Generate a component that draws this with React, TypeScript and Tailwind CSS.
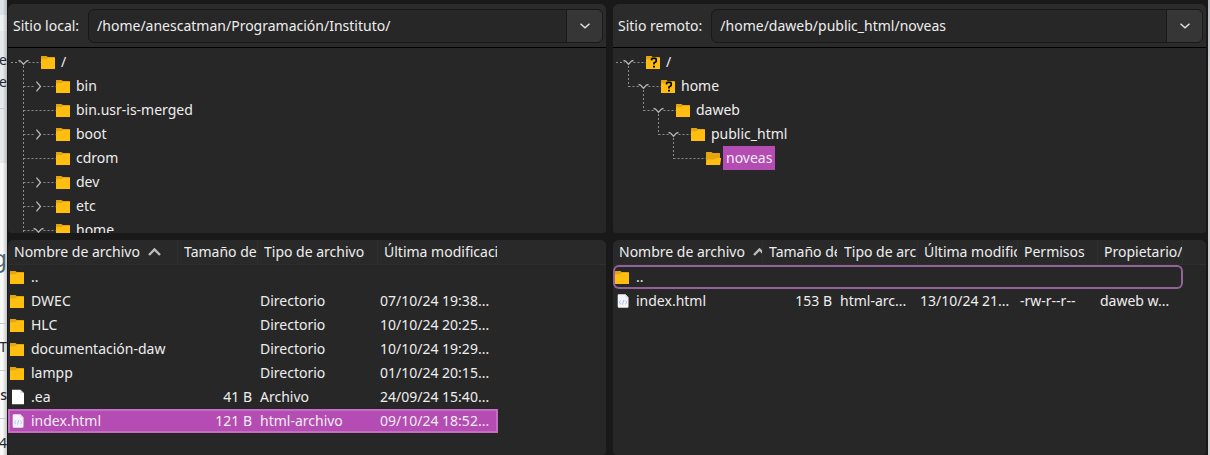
import type { ReactNode } from "react";
import clsx from "clsx";

type IconKind = "folder" | "folder-open" | "folder-unknown" | "file" | "html";

function FileIcon({ kind }: { kind: IconKind }) {
  if (kind === "file" || kind === "html") {
    const isHtml = kind === "html";
    return (
      <svg className="h-4 w-[15px] shrink-0" viewBox="0 0 15 16" aria-hidden="true">
        {isHtml ? (
          <>
            <path d="M3.7 1.2h6.8l3 3.2v9.2q0 1.2-1.2 1.2H3.9q-1.2 0-1.2-1.2V2.3q0-1.1 1-1.1z" fill="#f4f4f8" />
            <path d="M10.3 1.2l3.2 3.3h-2.3q-.9 0-.9-.9z" fill="#dcdce6" />
            <path d="M6 7.6L4.2 9.4 6 11.2M10.2 7.6L12 9.4l-1.8 1.8M8.8 7l-1.4 4.8" fill="none" stroke="#a9b8f2" strokeWidth="0.9" />
          </>
        ) : (
          <>
            <path d="M2 .8h8.4L14 4.2v11H2z" fill="#ffffff" />
            <path d="M10.4.8L14 4.2h-3.6z" fill="#dcdcdc" />
          </>
        )}
      </svg>
    );
  }
  return (
    <svg className="h-[13px] w-[15px] shrink-0" viewBox="0 0 15 13" aria-hidden="true">
      <path d="M0 .5Q0 0 .5 0H5.5L6.6 1H13.5q.5 0 .5.5V12H0z" fill="#e5a50f" />
      {kind === "folder-open" ? (
        <path d="M0 12.5L1 8.2q.2-.7.9-.7h6L10.4 6H15.2l-1 6.4q-.1.6-.7.6H.5q-.5 0-.5-.5z" fill="#ffbe10" />
      ) : (
        <path d="M0 3.2H5.2L7 2H14V12.5q0 .5-.5.5H.5Q0 13 0 12.5z" fill="#ffbe10" />
      )}
      {kind === "folder-unknown" && (
        <>
          <path d="M5.6 4.5V3.3q0-.9 1-.9h2.6q1 0 1 1v1.5q0 .8-.7 1.2L8 7v1.5" fill="none" stroke="#000000" strokeWidth="1.7" />
          <path d="M7 9.7h2v1.9H7z" fill="#000000" />
        </>
      )}
    </svg>
  );
}

type TreeNode = {
  label: string;
  level: number;
  icon: IconKind;
  state: "open" | "closed" | "leaf";
  hasNext?: boolean;
  selected?: boolean;
};

function Guides({ node }: { node: TreeNode }) {
  const width = 33 + node.level * 15;
  const parentX = node.level * 15 + 0.5;
  const toggleX = parentX + 15;
  const startX = node.level === 0 ? 3 : parentX;
  return (
    <svg className="h-6 shrink-0" style={{ width }} viewBox={`0 0 ${width} 24`} aria-hidden="true">
      <g fill="none" stroke="#8c8c8c" strokeDasharray="2 2">
        {node.level > 0 && <path d={`M${parentX} 0V${node.hasNext ? 24 : 13}`} />}
        {node.state === "leaf" ? (
          <path d={`M${startX} 12.5H${width}`} />
        ) : (
          <path d={`M${startX} 12.5H${toggleX - 4}M${toggleX + 5} 12.5H${width}`} />
        )}
        {node.state === "open" && <path d={`M${toggleX} 16V24`} />}
      </g>
      {node.state === "open" && (
        <path d={`M${toggleX - 5} 10.5l2 .5 3 3.2 3-3.2 2-.5`} fill="none" stroke="#b4b4b4" strokeWidth="1.3" />
      )}
      {node.state === "closed" && (
        <path d={`M${toggleX - 2} 7.5l1 1.5 3 3.5-3 3.5-1 1.5`} fill="none" stroke="#b4b4b4" strokeWidth="1.3" />
      )}
    </svg>
  );
}

function Tree({ nodes, label }: { nodes: TreeNode[]; label: string }) {
  return (
    <ul className="h-[185px] overflow-hidden bg-[#272727] pt-0.5" role="tree" aria-label={label}>
      {nodes.map((node) => (
        <li
          key={node.label}
          className="flex h-6 items-center"
          role="treeitem"
          aria-level={node.level + 1}
          aria-selected={!!node.selected}
        >
          <Guides node={node} />
          <FileIcon kind={node.icon} />
          <span className={clsx("ml-0.5 px-[3px] leading-6", node.selected && "bg-[#b44cb4]")}>{node.label}</span>
        </li>
      ))}
    </ul>
  );
}

function AddressBar({ id, label, path }: { id: string; label: string; path: string }) {
  return (
    <div className="flex h-11 items-center gap-[9px] border-b border-black bg-[#2b2b2b] pr-[3px] pl-[5px]">
      <label htmlFor={id} className="shrink-0">
        {label}
      </label>
      <div className="flex h-[34px] min-w-0 flex-1 overflow-hidden rounded-md border border-[#191919] bg-[#272727]">
        <input
          id={id}
          type="text"
          defaultValue={path}
          className="min-w-0 flex-1 bg-transparent px-2 outline-none"
        />
        <button
          type="button"
          aria-label="Mostrar rutas recientes"
          className="flex w-9 items-center justify-center border-l border-[#191919] bg-[#363636]"
        >
          <svg className="h-1.5 w-2.5" viewBox="0 0 10 6" aria-hidden="true">
            <path d="M.5 .8L5 4.8 9.5 .8" fill="none" stroke="#e6e6e6" strokeWidth="1.3" />
          </svg>
        </button>
      </div>
    </div>
  );
}

function SitePanel({ children }: { children: ReactNode }) {
  return <section className="min-w-0 overflow-hidden rounded-t-md rounded-b-sm bg-[#272727]">{children}</section>;
}

type Column = { title: string; width: string };
type Entry = { icon: IconKind; cells: string[]; state?: "selected" | "focused" };

function FileTable({ columns, entries, label }: { columns: Column[]; entries: Entry[]; label: string }) {
  return (
    <table className="w-full table-fixed border-separate border-spacing-0 text-left" aria-label={label}>
      <colgroup>
        {columns.map((c) => (
          <col key={c.title} className={c.width} />
        ))}
        <col />
      </colgroup>
      <thead>
        <tr>
          {columns.map((c, i) => (
            <th
              key={c.title}
              aria-sort={i === 0 ? "ascending" : undefined}
              className="h-[25px] overflow-hidden border-r border-b border-[#2e2e2e] bg-[#292929] p-0 pl-1.5 font-normal"
            >
              <div className="flex items-center gap-2 overflow-hidden whitespace-nowrap">
                {c.title}
                {i === 0 && (
                  <svg className="h-2.5 w-[13px] shrink-0" viewBox="0 0 13 10" aria-hidden="true">
                    <path d="M1 8l5.5-5.5L12 8" fill="none" stroke="#bcbcbc" strokeWidth="2.4" />
                  </svg>
                )}
              </div>
            </th>
          ))}
          <th className="border-b border-[#2e2e2e] bg-[#292929] p-0" />
        </tr>
      </thead>
      <tbody>
        {entries.map((e) => (
          <tr key={e.cells[0]}>
            {columns.map((c, i) => (
              <td
                key={c.title}
                className={clsx(
                  "h-6 overflow-hidden p-0 whitespace-nowrap",
                  e.state && "border-y-2",
                  e.state && i === 0 && "border-l-2",
                  e.state && i === columns.length - 1 && "border-r-2",
                  e.state === "selected" && "border-[#c56fc4] bg-[#b44cb4]",
                  e.state === "focused" && "border-[#93629a]",
                  e.state === "focused" && i === 0 && "rounded-l-md",
                  e.state === "focused" && i === columns.length - 1 && "rounded-r-md",
                  i === 0 && !e.state && "pl-0.5",
                  i === 1 && "pr-1.5 text-right",
                  i > 1 && "pl-0.5",
                )}
              >
                {i === 0 ? (
                  <div className="flex items-center gap-1.5">
                    <FileIcon kind={e.icon} />
                    {e.cells[0]}
                  </div>
                ) : (
                  e.cells[i]
                )}
              </td>
            ))}
            <td className="p-0" />
          </tr>
        ))}
      </tbody>
    </table>
  );
}

const localTree: TreeNode[] = [
  { label: "/", level: 0, icon: "folder", state: "open" },
  { label: "bin", level: 1, icon: "folder", state: "closed", hasNext: true },
  { label: "bin.usr-is-merged", level: 1, icon: "folder", state: "leaf", hasNext: true },
  { label: "boot", level: 1, icon: "folder", state: "closed", hasNext: true },
  { label: "cdrom", level: 1, icon: "folder", state: "leaf", hasNext: true },
  { label: "dev", level: 1, icon: "folder", state: "closed", hasNext: true },
  { label: "etc", level: 1, icon: "folder", state: "closed", hasNext: true },
  { label: "home", level: 1, icon: "folder", state: "open", hasNext: true },
];

const remoteTree: TreeNode[] = [
  { label: "/", level: 0, icon: "folder-unknown", state: "open" },
  { label: "home", level: 1, icon: "folder-unknown", state: "open" },
  { label: "daweb", level: 2, icon: "folder", state: "open" },
  { label: "public_html", level: 3, icon: "folder", state: "open" },
  { label: "noveas", level: 4, icon: "folder-open", state: "leaf", selected: true },
];

const localColumns: Column[] = [
  { title: "Nombre de archivo", width: "w-[170px]" },
  { title: "Tamaño de archivo", width: "w-20" },
  { title: "Tipo de archivo", width: "w-[120px]" },
  { title: "Última modificación", width: "w-[120px]" },
];

const remoteColumns: Column[] = [
  { title: "Nombre de archivo", width: "w-[150px]" },
  { title: "Tamaño de archivo", width: "w-[75px]" },
  { title: "Tipo de archivo", width: "w-20" },
  { title: "Última modificación", width: "w-[100px]" },
  { title: "Permisos", width: "w-20" },
  { title: "Propietario/Grupo", width: "w-[85px]" },
];

const localEntries: Entry[] = [
  { icon: "folder", cells: ["..", "", "", ""] },
  { icon: "folder", cells: ["DWEC", "", "Directorio", "07/10/24 19:38..."] },
  { icon: "folder", cells: ["HLC", "", "Directorio", "10/10/24 20:25..."] },
  { icon: "folder", cells: ["documentación-daw", "", "Directorio", "10/10/24 19:29..."] },
  { icon: "folder", cells: ["lampp", "", "Directorio", "01/10/24 20:15..."] },
  { icon: "file", cells: [".ea", "41 B", "Archivo", "24/09/24 15:40..."] },
  { icon: "html", cells: ["index.html", "121 B", "html-archivo", "09/10/24 18:52..."], state: "selected" },
];

const remoteEntries: Entry[] = [
  { icon: "folder", cells: ["..", "", "", "", "", ""], state: "focused" },
  { icon: "html", cells: ["index.html", "153 B", "html-arc...", "13/10/24 21...", "-rw-r--r--", "daweb w..."] },
];

function PageBehind() {
  return (
    <aside className="flex w-[7px] shrink-0 flex-col overflow-hidden bg-linear-to-r from-[#f8f8f8] from-40% to-[#c4c4c4] text-[#22272e] [&>div]:flex [&>div]:shrink-0 [&>div]:items-center [&>div]:justify-end">
      <div className="h-[15px] bg-[#4a6a8a]/15" />
      <div className="h-4 bg-[#4a6a8a]/5" />
      <div className="h-[18px] bg-[#4a6a8a]/10" />
      <div className="h-[22px] bg-[#4a6a8a]/10">e</div>
      <div className="h-[22px] bg-[#4a6a8a]/10">e</div>
      <div className="h-4 border-b border-[#c8ccd2] bg-[#4a6a8a]/10" />
      <div className="h-[54px] bg-[#4a6a8a]/10" />
      <div className="mt-[73px] h-11 text-2xl text-[#4b6573]">g</div>
      <div className="h-11 border-b border-[#c8c8d2]" />
      <div className="h-[47px] border-b border-[#c8c8d2]">T</div>
      <div className="h-12 border-b border-[#c8c8d2] font-medium">s</div>
      <div className="h-12">4</div>
    </aside>
  );
}

export default function App() {
  return (
    <div className="flex h-screen overflow-hidden bg-[#191919] font-['Noto_Sans',sans-serif] text-sm text-[#eeeeee]">
      <PageBehind />
      <main className="grid min-w-0 flex-1 grid-cols-[598fr_593fr] grid-rows-[auto_1fr] gap-[7px] pt-1 pr-0.5 pl-px">
        <SitePanel>
          <AddressBar id="local-path" label="Sitio local:" path="/home/anescatman/Programación/Instituto/" />
          <Tree nodes={localTree} label="Árbol local" />
        </SitePanel>
        <SitePanel>
          <AddressBar id="remote-path" label="Sitio remoto:" path="/home/daweb/public_html/noveas" />
          <Tree nodes={remoteTree} label="Árbol remoto" />
        </SitePanel>
        <SitePanel>
          <FileTable columns={localColumns} entries={localEntries} label="Archivos locales" />
        </SitePanel>
        <SitePanel>
          <FileTable columns={remoteColumns} entries={remoteEntries} label="Archivos remotos" />
        </SitePanel>
      </main>
      <div className="w-0.5 shrink-0 bg-linear-to-b from-[#b9bec4] to-[#d2d2d2] to-15%" />
    </div>
  );
}
